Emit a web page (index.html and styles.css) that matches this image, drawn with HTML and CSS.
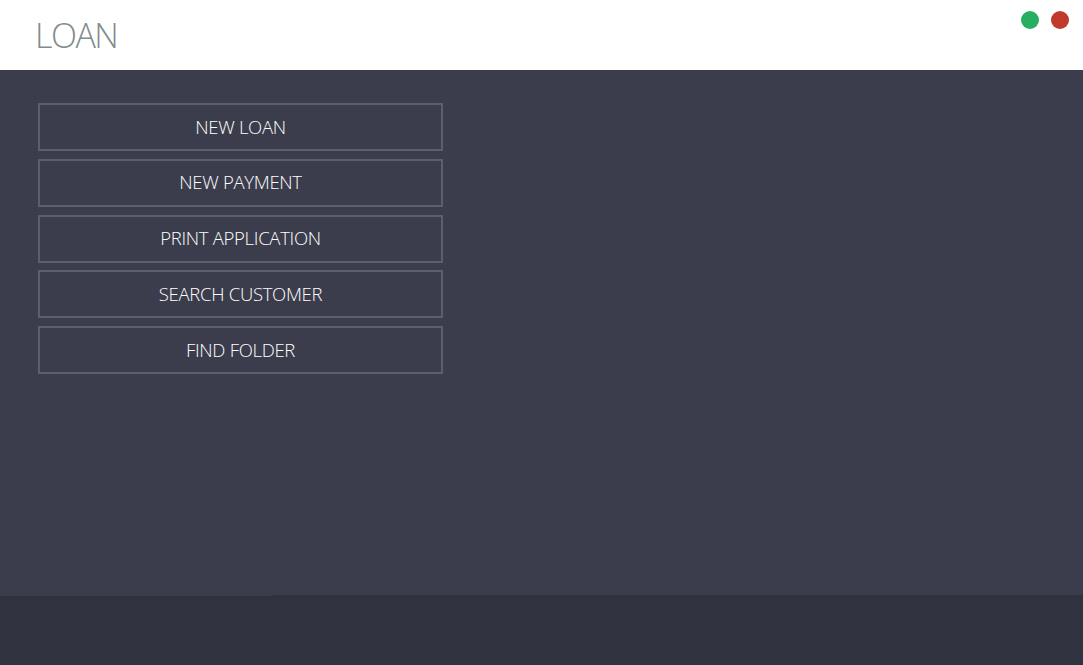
FILE: index.html
```html
<!DOCTYPE html>
<html>
<head>
<meta charset="utf-8">
<link rel="stylesheet" href="styles.css">
</head>
<body>
<div class="app">
  <header class="header">
    <h1 class="title">LOAN</h1>
    <div class="controls">
      <span class="dot dot-green"></span>
      <span class="dot dot-red"></span>
    </div>
  </header>
  <main class="main">
    <nav class="menu">
      <button class="btn">NEW LOAN</button>
      <button class="btn">NEW PAYMENT</button>
      <button class="btn">PRINT APPLICATION</button>
      <button class="btn">SEARCH CUSTOMER</button>
      <button class="btn">FIND FOLDER</button>
    </nav>
  </main>
  <footer class="footer"><div class="footer-lip"></div></footer>
</div>
</body>
</html>
```
FILE: styles.css
```css
* { box-sizing: border-box; }
html, body { margin: 0; padding: 0; }
body {
  width: 1083px;
  height: 665px;
  overflow: hidden;
  font-family: "Open Sans", "Noto Sans", sans-serif;
}
.app {
  display: flex;
  flex-direction: column;
  height: 665px;
}
.header {
  height: 70px;
  background: #ffffff;
  display: flex;
  justify-content: space-between;
  align-items: flex-start;
  padding: 0 14px 0 35px;
}
.title {
  margin: 13px 0 0 0;
  font-weight: 300;
  font-size: 34px;
  line-height: 44px;
  color: #7f8c8d;
  letter-spacing: -1.5px;
}
.controls {
  display: flex;
  gap: 12px;
  margin-top: 11px;
}
.dot {
  width: 18px;
  height: 18px;
  border-radius: 50%;
  display: block;
}
.dot-green { background: #27ae60; }
.dot-red { background: #c0392b; }
.main {
  height: 525px;
  background: #3b3d4c;
  padding: 33px 0 0 38px;
}
.menu {
  display: flex;
  flex-direction: column;
  gap: 7.8px;
  width: 405px;
}
.btn {
  height: 48px;
  width: 405px;
  background: transparent;
  border: 2px solid #5b5e6b;
  color: #ffffff;
  font-family: "Open Sans", "Noto Sans", sans-serif;
  font-size: 18.5px;
  font-weight: 300;
  letter-spacing: -0.3px;
  padding: 0 0 2px 0;
}
.footer {
  flex: 1;
  background: #30333f;
}
.footer-lip {
  width: 271px;
  height: 1px;
  background: #3b3d4c;
}
```
